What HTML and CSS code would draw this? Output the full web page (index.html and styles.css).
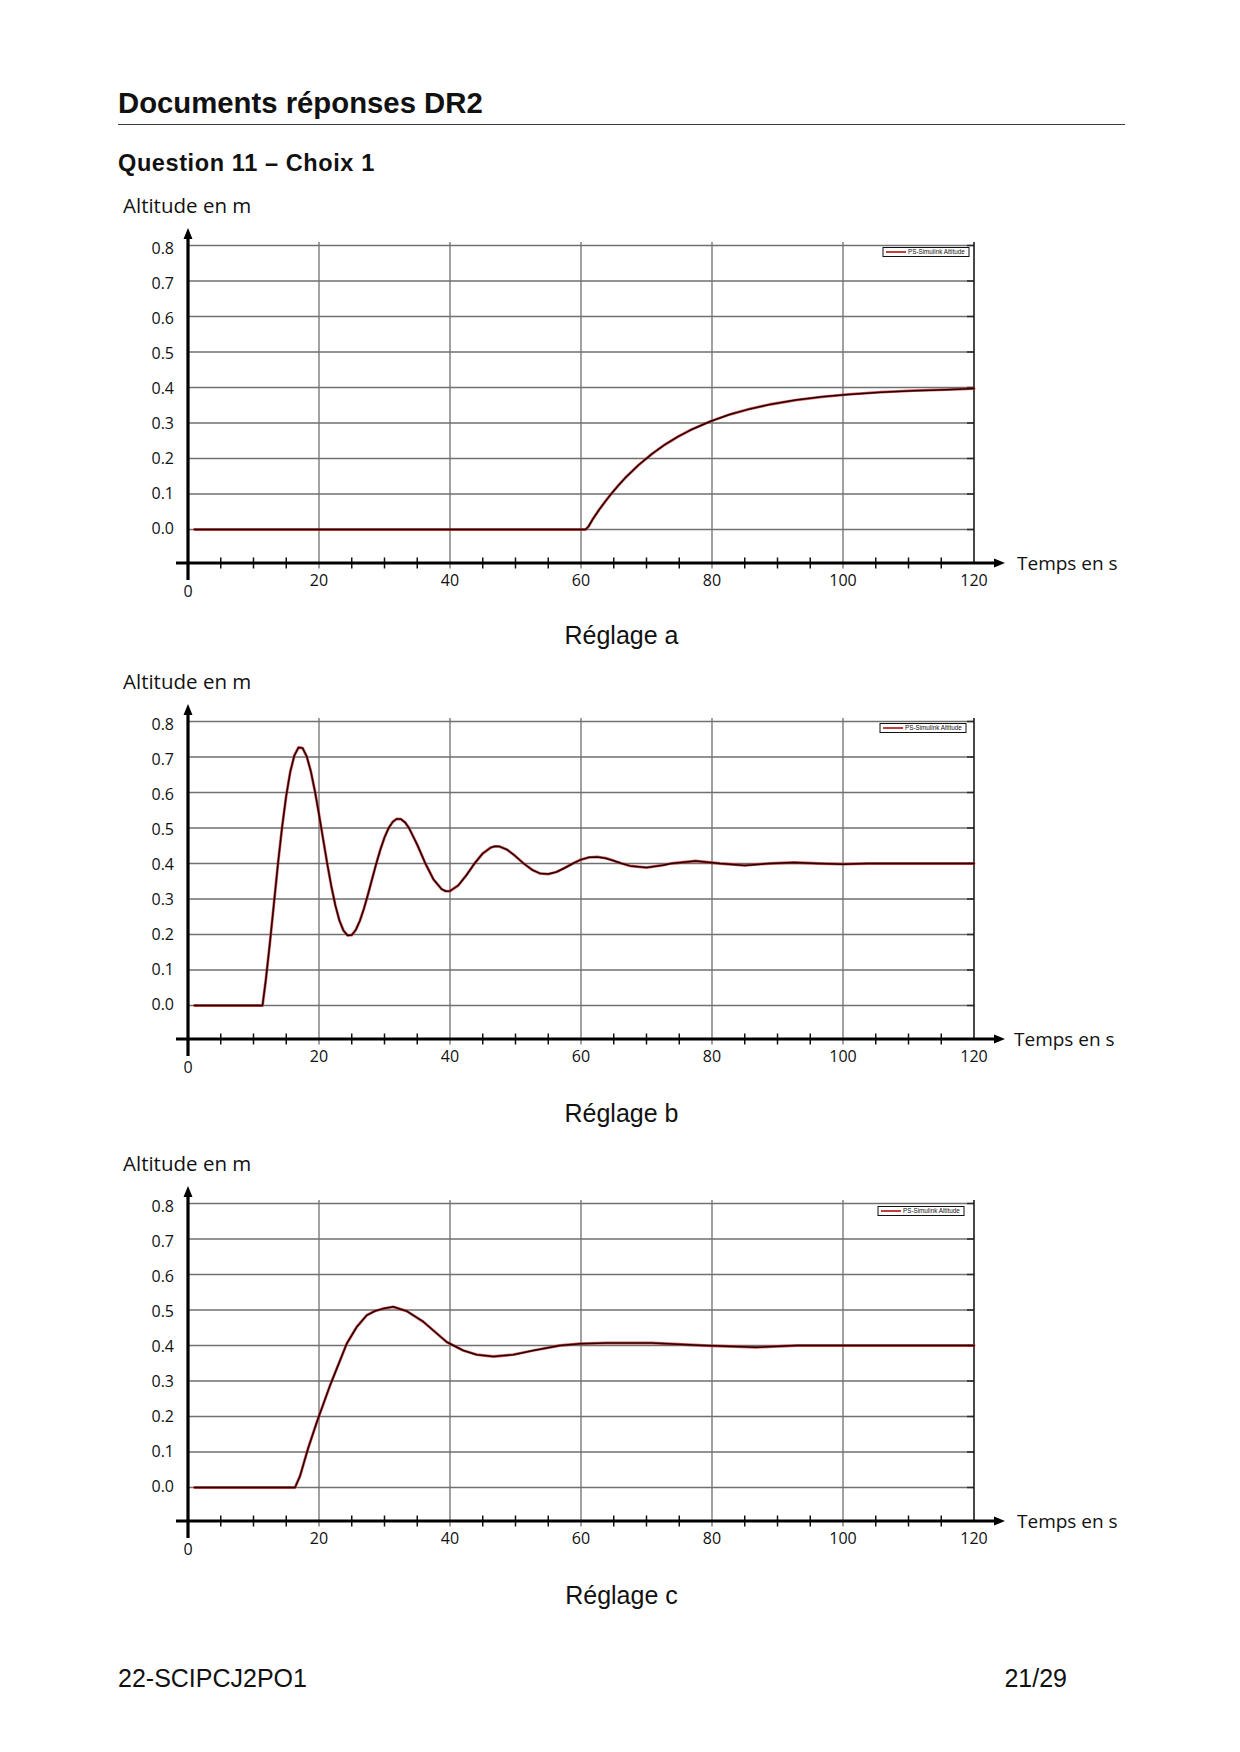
FILE: index.html
```html
<!DOCTYPE html>
<html lang="fr">
<head>
<meta charset="utf-8">
<title>Documents réponses DR2</title>
<link rel="stylesheet" href="styles.css">
</head>
<body>
<div class="page">
  <h1 class="doc-title">Documents réponses DR2</h1>
  <h2 class="question">Question 11 – Choix 1</h2>

  <figure class="chart chart-a">
    <div class="y-title">Altitude en m</div>
    <svg class="plot" viewBox="0 0 1007 380" width="1007" height="380">
      <path class="grid" d="M70 21.5H856M70 57H856M70 92.5H856M70 128H856M70 163.5H856M70 199H856M70 234.5H856M70 270H856M70 305.5H856"/>
      <path class="grid" d="M201 18V344.5M332 18V344.5M463 18V344.5M594 18V344.5M725 18V344.5"/>
      <path class="rtick" d="M849 21.5H856M849 57H856M849 92.5H856M849 128H856M849 163.5H856M849 199H856M849 234.5H856M849 270H856M849 305.5H856"/>
      <path class="border" d="M856 18V339"/>
      <path class="tick" d="M102.75 333.5V344.5M135.5 333.5V344.5M168.25 333.5V344.5M233.75 333.5V344.5M266.5 333.5V344.5M299.25 333.5V344.5M364.75 333.5V344.5M397.5 333.5V344.5M430.25 333.5V344.5M495.75 333.5V344.5M528.5 333.5V344.5M561.25 333.5V344.5M626.75 333.5V344.5M659.5 333.5V344.5M692.25 333.5V344.5M757.75 333.5V344.5M790.5 333.5V344.5M823.25 333.5V344.5"/>
      <path class="axis" d="M70 356V13M58 339H877"/>
      <polygon class="arrow" points="70,4 65.5,15 74.5,15"/>
      <polygon class="arrow" points="887,339 876,334.5 876,343.5"/>
      <g class="ylab">
        <text x="56" y="30">0.8</text><text x="56" y="65">0.7</text><text x="56" y="100">0.6</text>
        <text x="56" y="135">0.5</text><text x="56" y="170">0.4</text><text x="56" y="205">0.3</text>
        <text x="56" y="240">0.2</text><text x="56" y="275">0.1</text><text x="56" y="310">0.0</text>
      </g>
      <g class="xlab">
        <text x="70" y="372.5">0</text><text x="201" y="361.5">20</text><text x="332" y="361.5">40</text>
        <text x="463" y="361.5">60</text><text x="594" y="361.5">80</text><text x="725" y="361.5">100</text>
        <text x="856" y="361.5">120</text>
      </g>
      <text class="axis-name" x="899" y="345.5">Temps en s</text>
      <rect class="legend-box" x="765" y="23.5" width="86" height="9"/>
      <path class="legend-line" d="M768 28H788"/>
      <text class="legend-text" x="790" y="30.3">PS-Simulink Altitude</text>
      <polyline class="curve-under" points="76.5,305.5 467.5,305.5 470.5,302.5 474.8,295.1 481.3,285.5 487.9,276.6 494.4,268.4 501,260.7 507.5,253.6 520.6,241 533.7,230.1 546.8,220.7 559.9,212.7 573,205.8 592.7,197.2 612.3,190.3 632,184.9 651.6,180.5 677.8,176.1 704,172.8 730.2,170.4 763,168.2 795.7,166.7 828.5,165.7 856,164.6"/>
      <polyline class="curve" points="76.5,305.5 467.5,305.5 470.5,302.5 474.8,295.1 481.3,285.5 487.9,276.6 494.4,268.4 501,260.7 507.5,253.6 520.6,241 533.7,230.1 546.8,220.7 559.9,212.7 573,205.8 592.7,197.2 612.3,190.3 632,184.9 651.6,180.5 677.8,176.1 704,172.8 730.2,170.4 763,168.2 795.7,166.7 828.5,165.7 856,164.6"/>
    </svg>
    <figcaption class="caption">Réglage a</figcaption>
  </figure>

  <figure class="chart chart-b">
    <div class="y-title">Altitude en m</div>
    <svg class="plot" viewBox="0 0 1007 380" width="1007" height="380">
      <path class="grid" d="M70 21.5H856M70 57H856M70 92.5H856M70 128H856M70 163.5H856M70 199H856M70 234.5H856M70 270H856M70 305.5H856"/>
      <path class="grid" d="M201 18V344.5M332 18V344.5M463 18V344.5M594 18V344.5M725 18V344.5"/>
      <path class="rtick" d="M849 21.5H856M849 57H856M849 92.5H856M849 128H856M849 163.5H856M849 199H856M849 234.5H856M849 270H856M849 305.5H856"/>
      <path class="border" d="M856 18V339"/>
      <path class="tick" d="M102.75 333.5V344.5M135.5 333.5V344.5M168.25 333.5V344.5M233.75 333.5V344.5M266.5 333.5V344.5M299.25 333.5V344.5M364.75 333.5V344.5M397.5 333.5V344.5M430.25 333.5V344.5M495.75 333.5V344.5M528.5 333.5V344.5M561.25 333.5V344.5M626.75 333.5V344.5M659.5 333.5V344.5M692.25 333.5V344.5M757.75 333.5V344.5M790.5 333.5V344.5M823.25 333.5V344.5"/>
      <path class="axis" d="M70 356V13M58 339H877"/>
      <polygon class="arrow" points="70,4 65.5,15 74.5,15"/>
      <polygon class="arrow" points="887,339 876,334.5 876,343.5"/>
      <g class="ylab">
        <text x="56" y="30">0.8</text><text x="56" y="65">0.7</text><text x="56" y="100">0.6</text>
        <text x="56" y="135">0.5</text><text x="56" y="170">0.4</text><text x="56" y="205">0.3</text>
        <text x="56" y="240">0.2</text><text x="56" y="275">0.1</text><text x="56" y="310">0.0</text>
      </g>
      <g class="xlab">
        <text x="70" y="372.5">0</text><text x="201" y="361.5">20</text><text x="332" y="361.5">40</text>
        <text x="463" y="361.5">60</text><text x="594" y="361.5">80</text><text x="725" y="361.5">100</text>
        <text x="856" y="361.5">120</text>
      </g>
      <text class="axis-name" x="896" y="345.5">Temps en s</text>
      <rect class="legend-box" x="762" y="23.5" width="86" height="9"/>
      <path class="legend-line" d="M765 28H785"/>
      <text class="legend-text" x="787" y="30.3">PS-Simulink Altitude</text>
      <polyline class="curve-under" points="76.5,305.5 144.5,305.5 147.8,280.2 151.9,242.8 156,202.9 160,163.5 164.1,127.1 168.2,95.9 172.3,71.6 176.4,55.3 180.5,47.5 184.6,48.1 188.7,56.4 192.8,71.2 196.9,91.1 201,114.3 205.1,139 209.2,163.5 213.3,186.1 217.4,205.5 221.4,220.5 225.5,230.6 229.6,235.4 233.7,235.1 237.8,229.9 241.9,220.7 246,208.4 250.1,194 254.2,178.7 258.3,163.5 262.4,149.5 266.5,137.5 270.6,128.1 274.7,121.9 278.8,118.9 282.9,119.1 287,122.3 291,128 299.2,144.6 307.4,163.5 315.6,179.6 323.8,189.3 327.9,191.2 332,191 340.2,185.5 348.4,175.2 356.5,163.5 364.7,153.5 372.9,147.5 377,146.3 381.1,146.4 389.3,149.8 397.5,156.2 405.7,163.5 413.9,169.7 422,173.4 430.2,174.1 438.4,172 446.6,168 454.8,163.5 463,159.6 471.2,157.3 479.4,156.9 487.5,158.2 495.7,160.7 503.9,163.5 512.1,165.9 528.5,167.6 544.9,165.2 553,163.5 577.6,161 602.2,163.5 626.7,165.4 651.3,163.5 675.9,162.5 700.4,163.5 725,164.2 750,163.5 856,163.5"/>
      <polyline class="curve" points="76.5,305.5 144.5,305.5 147.8,280.2 151.9,242.8 156,202.9 160,163.5 164.1,127.1 168.2,95.9 172.3,71.6 176.4,55.3 180.5,47.5 184.6,48.1 188.7,56.4 192.8,71.2 196.9,91.1 201,114.3 205.1,139 209.2,163.5 213.3,186.1 217.4,205.5 221.4,220.5 225.5,230.6 229.6,235.4 233.7,235.1 237.8,229.9 241.9,220.7 246,208.4 250.1,194 254.2,178.7 258.3,163.5 262.4,149.5 266.5,137.5 270.6,128.1 274.7,121.9 278.8,118.9 282.9,119.1 287,122.3 291,128 299.2,144.6 307.4,163.5 315.6,179.6 323.8,189.3 327.9,191.2 332,191 340.2,185.5 348.4,175.2 356.5,163.5 364.7,153.5 372.9,147.5 377,146.3 381.1,146.4 389.3,149.8 397.5,156.2 405.7,163.5 413.9,169.7 422,173.4 430.2,174.1 438.4,172 446.6,168 454.8,163.5 463,159.6 471.2,157.3 479.4,156.9 487.5,158.2 495.7,160.7 503.9,163.5 512.1,165.9 528.5,167.6 544.9,165.2 553,163.5 577.6,161 602.2,163.5 626.7,165.4 651.3,163.5 675.9,162.5 700.4,163.5 725,164.2 750,163.5 856,163.5"/>
    </svg>
    <figcaption class="caption caption-low">Réglage b</figcaption>
  </figure>

  <figure class="chart chart-c">
    <div class="y-title">Altitude en m</div>
    <svg class="plot" viewBox="0 0 1007 380" width="1007" height="380">
      <path class="grid" d="M70 21.5H856M70 57H856M70 92.5H856M70 128H856M70 163.5H856M70 199H856M70 234.5H856M70 270H856M70 305.5H856"/>
      <path class="grid" d="M201 18V344.5M332 18V344.5M463 18V344.5M594 18V344.5M725 18V344.5"/>
      <path class="rtick" d="M849 21.5H856M849 57H856M849 92.5H856M849 128H856M849 163.5H856M849 199H856M849 234.5H856M849 270H856M849 305.5H856"/>
      <path class="border" d="M856 18V339"/>
      <path class="tick" d="M102.75 333.5V344.5M135.5 333.5V344.5M168.25 333.5V344.5M233.75 333.5V344.5M266.5 333.5V344.5M299.25 333.5V344.5M364.75 333.5V344.5M397.5 333.5V344.5M430.25 333.5V344.5M495.75 333.5V344.5M528.5 333.5V344.5M561.25 333.5V344.5M626.75 333.5V344.5M659.5 333.5V344.5M692.25 333.5V344.5M757.75 333.5V344.5M790.5 333.5V344.5M823.25 333.5V344.5"/>
      <path class="axis" d="M70 356V13M58 339H877"/>
      <polygon class="arrow" points="70,4 65.5,15 74.5,15"/>
      <polygon class="arrow" points="887,339 876,334.5 876,343.5"/>
      <g class="ylab">
        <text x="56" y="30">0.8</text><text x="56" y="65">0.7</text><text x="56" y="100">0.6</text>
        <text x="56" y="135">0.5</text><text x="56" y="170">0.4</text><text x="56" y="205">0.3</text>
        <text x="56" y="240">0.2</text><text x="56" y="275">0.1</text><text x="56" y="310">0.0</text>
      </g>
      <g class="xlab">
        <text x="70" y="372.5">0</text><text x="201" y="361.5">20</text><text x="332" y="361.5">40</text>
        <text x="463" y="361.5">60</text><text x="594" y="361.5">80</text><text x="725" y="361.5">100</text>
        <text x="856" y="361.5">120</text>
      </g>
      <text class="axis-name" x="899" y="345.5">Temps en s</text>
      <rect class="legend-box" x="760" y="24.5" width="86" height="9"/>
      <path class="legend-line" d="M763 29H783"/>
      <text class="legend-text" x="785" y="31.3">PS-Simulink Altitude</text>
      <polyline class="curve-under" points="76.5,305.5 177,305.5 182,294.1 190.3,265.7 198.7,240.5 212,203.6 228.7,161.7 238.7,145 248.7,133.3 257,129 265.3,126.6 275.3,124.8 288.7,129.1 305.3,139.7 328.7,160 345.3,168.5 358.7,172.7 375.3,174.5 395.3,172.7 415.3,168.5 442,163.5 462,161.7 488.7,161 534,161 586,163.5 638,165.3 679,163.5 856,163.5"/>
      <polyline class="curve" points="76.5,305.5 177,305.5 182,294.1 190.3,265.7 198.7,240.5 212,203.6 228.7,161.7 238.7,145 248.7,133.3 257,129 265.3,126.6 275.3,124.8 288.7,129.1 305.3,139.7 328.7,160 345.3,168.5 358.7,172.7 375.3,174.5 395.3,172.7 415.3,168.5 442,163.5 462,161.7 488.7,161 534,161 586,163.5 638,165.3 679,163.5 856,163.5"/>
    </svg>
    <figcaption class="caption caption-low">Réglage c</figcaption>
  </figure>

  <footer class="doc-foot">
    <span>22-SCIPCJ2PO1</span>
    <span>21/29</span>
  </footer>
</div>
</body>
</html>
```

FILE: styles.css
```css
html, body {
  margin: 0;
  padding: 0;
  background: #ffffff;
}

body {
  color: #111111;
  font-family: "Liberation Sans", Arial, sans-serif;
}

.page {
  width: 1240px;
  box-sizing: border-box;
  padding: 86px 115px 0 118px;
}

.doc-title {
  margin: 0;
  font-family: "Liberation Sans", Arial, sans-serif;
  font-weight: 700;
  font-size: 29.3px;
  line-height: 34px;
  padding-bottom: 4px;
  border-bottom: 1.5px solid #3c3c3c;
}

.question {
  margin: 23.5px 0 0 0;
  font-family: "Liberation Sans", Arial, sans-serif;
  font-weight: 700;
  font-size: 23.5px;
  line-height: 28px;
  letter-spacing: 0.6px;
}

.chart {
  margin: 0;
  padding: 0;
}

.chart-a { margin-top: 16.2px; }
.chart-b { margin-top: 20.5px; }
.chart-c { margin-top: 23.3px; }

.y-title {
  font-family: "Open Sans", "Liberation Sans", sans-serif;
  font-size: 20.5px;
  line-height: 24px;
  padding-left: 5px;
  margin-bottom: 7px;
  color: #111111;
}

.plot {
  display: block;
  overflow: visible;
}

.caption {
  margin-top: 17.1px;
  font-family: "Liberation Sans", Arial, sans-serif;
  font-size: 25px;
  line-height: 28px;
  text-align: center;
}

.caption-low {
  margin-top: 19.1px;
}

.grid {
  fill: none;
  stroke: #707070;
  stroke-width: 1.3;
}

.rtick {
  fill: none;
  stroke: #2a2a2a;
  stroke-width: 1.4;
}

.border {
  fill: none;
  stroke: #1a1a1a;
  stroke-width: 1.6;
}

.tick {
  fill: none;
  stroke: #111111;
  stroke-width: 1.5;
}

.axis {
  fill: none;
  stroke: #000000;
  stroke-width: 3.2;
}

.arrow {
  fill: #000000;
}

.ylab text {
  font-family: "Open Sans", "Liberation Sans", sans-serif;
  font-size: 16px;
  fill: #111111;
  text-anchor: end;
}

.xlab text {
  font-family: "Open Sans", "Liberation Sans", sans-serif;
  font-size: 16px;
  fill: #111111;
  text-anchor: middle;
}

.axis-name {
  font-family: "Open Sans", "Liberation Sans", sans-serif;
  font-size: 19px;
  fill: #111111;
}

.legend-box {
  fill: #ffffff;
  stroke: #111111;
  stroke-width: 1;
}

.legend-line {
  fill: none;
  stroke: #b01010;
  stroke-width: 1.6;
}

.legend-text {
  font-family: "Liberation Sans", Arial, sans-serif;
  font-size: 6.3px;
  fill: #111111;
}

.curve-under {
  fill: none;
  stroke: #d42020;
  stroke-width: 2.8;
  stroke-linejoin: round;
  stroke-linecap: round;
  opacity: 0.75;
}

.curve {
  fill: none;
  stroke: #1e0202;
  stroke-width: 1.5;
  stroke-linejoin: round;
  stroke-linecap: round;
}

.doc-foot {
  display: flex;
  justify-content: space-between;
  margin-top: 55px;
  padding-right: 58px;
  font-family: "Liberation Sans", Arial, sans-serif;
  font-size: 25px;
  line-height: 28px;
}
```
